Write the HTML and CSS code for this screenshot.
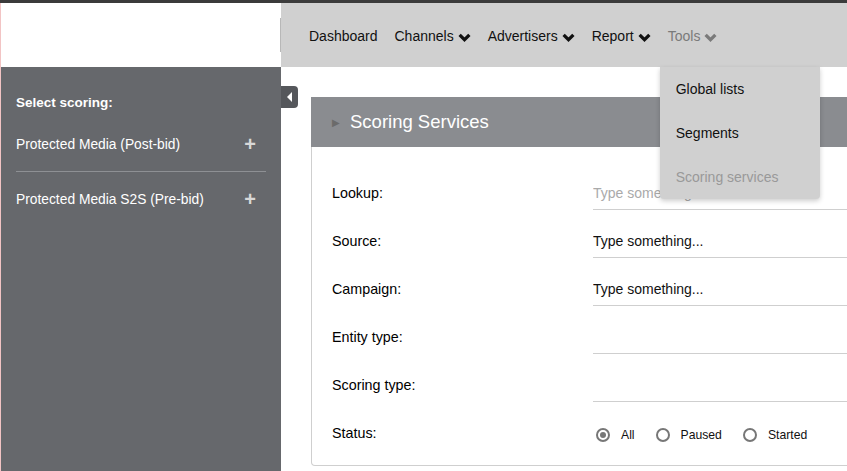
FILE: index.html
```html
<!DOCTYPE html>
<html lang="en">
<head>
  <meta charset="UTF-8">
  <meta name="viewport" content="width=device-width, initial-scale=1.0">
  <title>Scoring Services</title>
  <link rel="stylesheet" href="styles.css">
</head>
<body>
  <div class="topbar"></div>
  <div class="app">
    <header class="header">
      <div class="brand"></div>
      <nav class="nav">
        <a class="nav-item">Dashboard</a>
        <a class="nav-item">Channels <svg class="chev" viewBox="0 0 12 8"><path d="M1.5 1.5 6 6 10.5 1.5"/></svg></a>
        <a class="nav-item">Advertisers <svg class="chev" viewBox="0 0 12 8"><path d="M1.5 1.5 6 6 10.5 1.5"/></svg></a>
        <a class="nav-item">Report <svg class="chev" viewBox="0 0 12 8"><path d="M1.5 1.5 6 6 10.5 1.5"/></svg></a>
        <div class="nav-item nav-active">Tools <svg class="chev" viewBox="0 0 12 8"><path d="M1.5 1.5 6 6 10.5 1.5"/></svg>
          <ul class="dropdown">
            <li>Global lists</li>
            <li>Segments</li>
            <li class="current">Scoring services</li>
          </ul>
        </div>
      </nav>
    </header>

    <div class="main">
      <aside class="sidebar">
        <h3>Select scoring:</h3>
        <div class="side-item">Protected Media (Post-bid) <span class="plus">+</span></div>
        <div class="side-item">Protected Media S2S (Pre-bid) <span class="plus">+</span></div>
      </aside>
      <button class="collapse"><svg viewBox="0 0 6 10"><path d="M5 0 0 5 5 10z"/></svg></button>

      <section class="content">
        <div class="panel">
          <div class="panel-head"><span class="arrow">&#9654;</span> Scoring Services</div>
          <div class="panel-body">
            <div class="row">
              <label>Lookup:</label>
              <input type="text" placeholder="Type something...">
            </div>
            <div class="row">
              <label>Source:</label>
              <input type="text" value="Type something...">
            </div>
            <div class="row">
              <label>Campaign:</label>
              <input type="text" value="Type something...">
            </div>
            <div class="row">
              <label>Entity type:</label>
              <input type="text">
            </div>
            <div class="row">
              <label>Scoring type:</label>
              <input type="text">
            </div>
            <div class="row">
              <label>Status:</label>
              <div class="radios">
                <span class="radio checked"></span><span class="radio-label">All</span>
                <span class="radio"></span><span class="radio-label">Paused</span>
                <span class="radio"></span><span class="radio-label">Started</span>
              </div>
            </div>
          </div>
        </div>
      </section>
    </div>
  </div>
</body>
</html>
```

FILE: styles.css
```css
html, body {
  margin: 0;
  padding: 0;
  height: 100%;
  overflow: hidden;
}

body {
  font-family: "Liberation Sans", Arial, sans-serif;
  color: #111;
  background-color: #fff;
}

.topbar {
  height: 3px;
  background-color: #3b3b3b;
}

.app {
  border-left: 1px solid #f2c4c4;
  height: calc(100% - 3px);
  display: flex;
  flex-direction: column;
}

.header {
  display: flex;
  height: 64px;
  flex-shrink: 0;
}

.brand {
  width: 280px;
  display: flex;
  align-items: center;
  justify-content: flex-end;
}

.brand::after {
  content: '';
  width: 1px;
  height: 34px;
  background-color: #b8b8b8;
}

.nav {
  flex: 1;
  background-color: #d0d0d0;
  display: flex;
  align-items: center;
  padding-left: 28px;
  padding-top: 2px;
  box-sizing: border-box;
  font-size: 14px;
}

.nav-item {
  position: relative;
  margin-right: 17px;
  color: #111;
  display: flex;
  align-items: center;
  height: 100%;
  cursor: pointer;
}

.chev {
  width: 13px;
  height: 9px;
  margin-left: 4px;
  margin-top: 2px;
  fill: none;
  stroke: #111;
  stroke-width: 3;
}

.nav-active {
  color: #7a7a7a;
}

.nav-active .chev {
  stroke: #7a7a7a;
}

.dropdown {
  position: absolute;
  top: 62px;
  left: -8px;
  width: 160px;
  margin: 0;
  padding: 0;
  list-style: none;
  background-color: #d0d0d0;
  border-radius: 0 0 4px 4px;
  box-shadow: 0 2px 5px rgba(0,0,0,0.2);
  z-index: 2;
}

.dropdown li {
  height: 44px;
  line-height: 44px;
  padding-left: 16px;
  color: #111;
}

.dropdown li.current {
  color: #999;
}

.main {
  flex: 1;
  display: flex;
  position: relative;
}

.sidebar {
  width: 280px;
  flex-shrink: 0;
  background-color: #66686c;
  color: #fff;
  padding: 28px 15px 0 15px;
  box-sizing: border-box;
  font-size: 13.8px;
}

.sidebar h3 {
  margin: 0 0 20px 0;
  font-size: 13.5px;
}

.side-item {
  display: flex;
  justify-content: space-between;
  align-items: center;
  height: 28px;
  padding-right: 10px;
}

.side-item + .side-item {
  border-top: 1px solid #8e9094;
  margin-top: 13px;
  padding-top: 13px;
}

.plus {
  font-size: 20px;
  font-weight: bold;
  color: #d8d8d8;
}

.collapse {
  position: absolute;
  left: 280px;
  top: 19px;
  width: 17px;
  height: 22px;
  padding: 0;
  border: none;
  background-color: #55575b;
  border-radius: 0 4px 4px 0;
  display: flex;
  align-items: center;
  justify-content: center;
}

.collapse svg {
  width: 6px;
  height: 10px;
  fill: #fff;
}

.content {
  flex: 1;
  padding: 30px 0 0 30px;
  overflow: hidden;
}

.panel {
  width: 640px;
}

.panel-head {
  height: 50px;
  background-color: #8a8c90;
  color: #fff;
  font-size: 18.5px;
  display: flex;
  align-items: center;
  padding-left: 21px;
}

.panel-head .arrow {
  font-size: 10px;
  color: #6b6b6b;
  margin-right: 10px;
}

.panel-body {
  border: 1px solid #cfcfcf;
  border-top: none;
  border-radius: 0 0 0 4px;
  padding: 22px 0 8px 20px;
}

.row {
  display: grid;
  grid-template-columns: 261px 1fr;
  align-items: center;
  height: 48px;
}

.row label {
  font-size: 14.3px;
  color: #000;
}

.row input {
  height: 34px;
  box-sizing: border-box;
  border: none;
  border-bottom: 1px solid #cfcfcf;
  font-family: inherit;
  font-size: 14px;
  color: #111;
  padding: 0;
  outline: none;
}

.row input::placeholder {
  color: #aaa;
}

.radios {
  display: flex;
  align-items: center;
  font-size: 12.2px;
  padding-left: 3px;
  padding-top: 4px;
}

.radio {
  width: 10px;
  height: 10px;
  border: 2px solid #777;
  border-radius: 50%;
  position: relative;
  margin-right: 11px;
}

.radio.checked::after {
  content: '';
  position: absolute;
  left: 2px;
  top: 2px;
  width: 6px;
  height: 6px;
  border-radius: 50%;
  background-color: #777;
}

.radio-label {
  margin-right: 21px;
}
```
